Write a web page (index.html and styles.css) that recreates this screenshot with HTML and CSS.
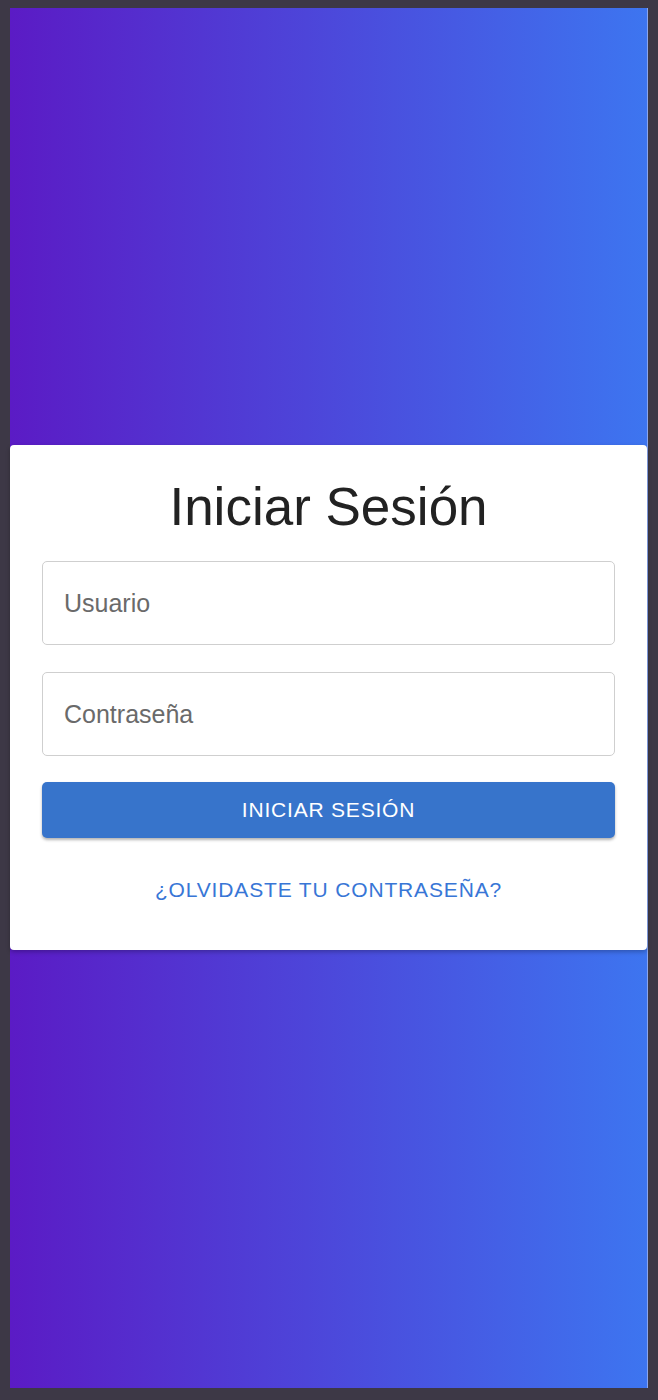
FILE: index.html
```html
<!DOCTYPE html>
<html lang="es">
<head>
<meta charset="utf-8">
<title>Iniciar Sesión</title>
<link rel="stylesheet" href="styles.css">
</head>
<body>
<div class="screen">
  <form class="card">
    <h1 class="title">Iniciar Sesión</h1>
    <input class="field field-user" type="text" placeholder="Usuario">
    <input class="field" type="password" placeholder="Contraseña">
    <button class="btn" type="button">Iniciar Sesión</button>
    <a class="link" href="#">¿Olvidaste tu contraseña?</a>
  </form>
</div>
</body>
</html>
```

FILE: styles.css
```css
html, body {
  margin: 0;
  padding: 0;
}
body {
  background: #3d3846;
  padding: 8px 10px 12px 10px;
  font-family: "Liberation Sans", Arial, sans-serif;
}
.screen {
  width: 638px;
  height: 1380px;
  background: linear-gradient(to right, #5b1bc5, #3d75f0);
  display: flex;
  align-items: center;
  box-sizing: border-box;
  border-right: 1px solid #8aa6ef;
}
.card {
  flex: 1;
  background: #fff;
  border-radius: 4px;
  box-shadow: 0 2px 4px rgba(0, 0, 0, 0.25);
  padding: 32px 32px 48px 32px;
  margin-bottom: 1px;
  display: flex;
  flex-direction: column;
}
.title {
  margin: 0 0 24px 0;
  font-weight: normal;
  font-size: 53px;
  line-height: 60px;
  text-align: center;
  color: #222;
}
.field {
  height: 84px;
  box-sizing: border-box;
  border: 1.5px solid #cfcfcf;
  border-radius: 5px;
  padding: 0 21px;
  font-family: inherit;
  font-size: 25px;
  color: #333;
  margin: 0 0 26px 0;
  outline: none;
}
.field-user {
  margin-bottom: 27px;
}
.field::placeholder {
  color: #6a6a6a;
}
.btn {
  height: 56px;
  border: none;
  border-radius: 5px;
  background: #3774cb;
  color: #fff;
  font-family: inherit;
  font-size: 21px;
  letter-spacing: 0.8px;
  text-transform: uppercase;
  box-shadow: 0 2px 3px rgba(0, 0, 0, 0.3);
  margin: 0 0 40px 0;
}
.link {
  text-align: center;
  font-size: 21px;
  line-height: 24px;
  letter-spacing: 0.85px;
  text-transform: uppercase;
  color: #3876d6;
  text-decoration: none;
}
```
